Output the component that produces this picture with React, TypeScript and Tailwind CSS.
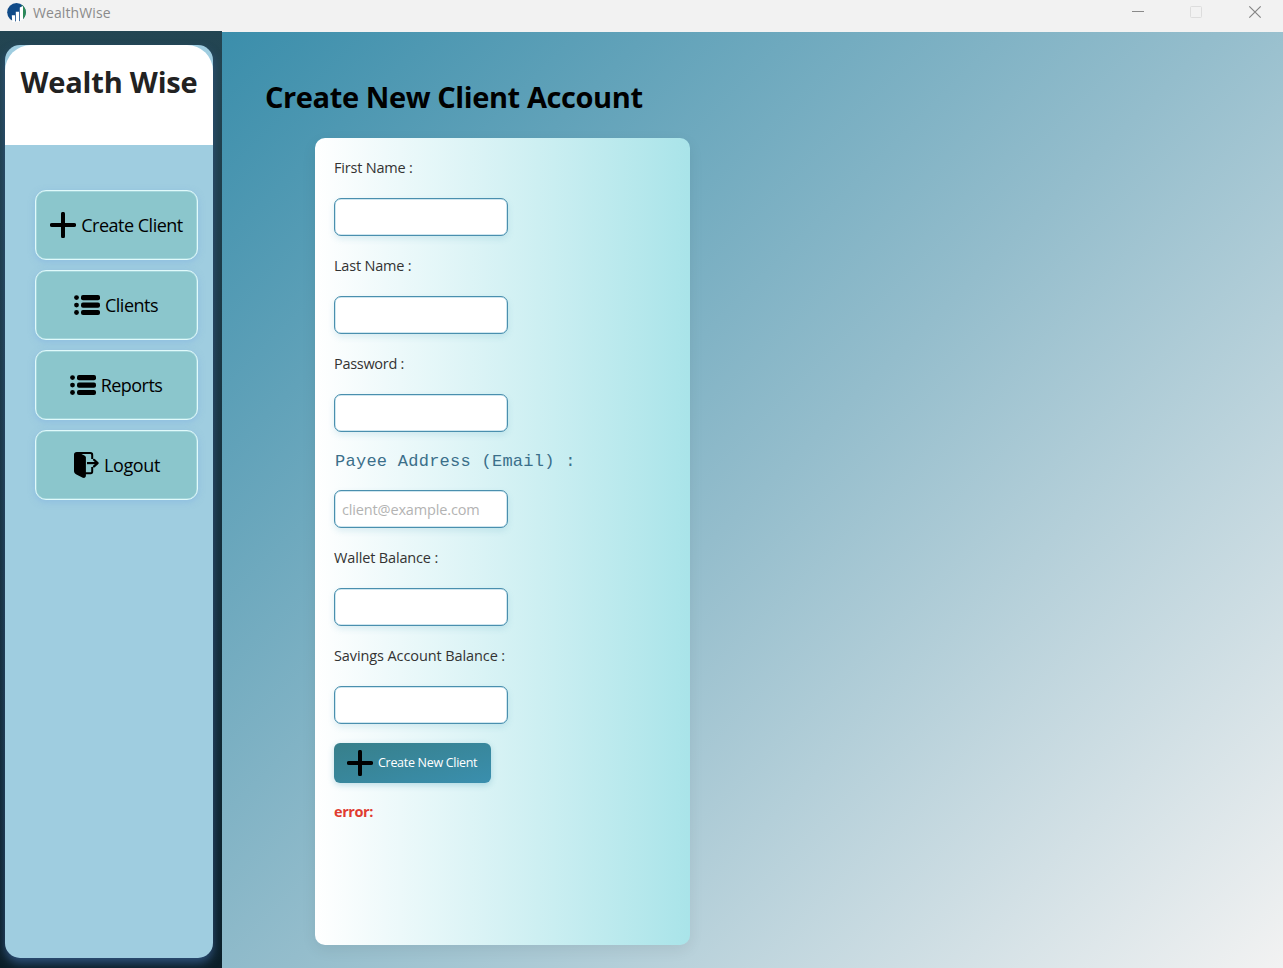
import React from "react";

function PlusIcon() {
  return (
    <svg width="26" height="26" viewBox="0 0 26 26" className="shrink-0">
      <path d="M13 1.8V24.2M1.8 13H24.2" stroke="#000" strokeWidth="4" strokeLinecap="round" />
    </svg>
  );
}

function ListIcon() {
  return (
    <svg width="26" height="26" viewBox="0 0 26 26" className="shrink-0">
      {[5.6, 13.1, 20.5].map((y) => (
        <g key={y}>
          <circle cx="2.5" cy={y} r="2.4" />
          <rect x="7" y={y - 2.6} width="19" height="5.2" rx="2" />
        </g>
      ))}
    </svg>
  );
}

function LogoutIcon() {
  return (
    <svg width="26" height="26" viewBox="0 0 26 26" className="shrink-0">
      <path d="M1 2.6C1 1 2.2 0 4 .1L6 .8L11.4 3.4C12.4 3.9 12.9 4.6 12.9 5.6V23.6C12.9 25.4 11.6 26.3 9.8 25.8L3.4 22.4C1.8 21.6 1 20.6 1 19Z" />
      <path d="M4 1.1H17.4C18.6 1.1 19.2 1.7 19.2 2.9V7M19.2 15V19.6C19.2 20.6 18.7 21.2 17.7 21.2H12" fill="none" stroke="#000" strokeWidth="2" />
      <path d="M14 11.1H24" fill="none" stroke="#000" strokeWidth="2.2" />
      <path d="M21 7.8L24.6 11.1L21 14.4" fill="none" stroke="#000" strokeWidth="2.2" strokeLinecap="round" strokeLinejoin="round" />
    </svg>
  );
}

function Logo() {
  return (
    <svg width="19" height="19" viewBox="0 0 19 19" className="shrink-0">
      <circle cx="9.5" cy="9.3" r="9.3" fill="#104a87" />
      <path d="M14.5 1.5A9.3 9.3 0 0 1 15.4 16.6Z" fill="#2d8a58" />
      <path d="M4.8 12.2H8V19H5.2Z M8.8 8.8H12V19H8.8Z M12.8 4.5L16 3V16.8L12.8 18.6Z" fill="#fff" />
    </svg>
  );
}

const nav = [
  { label: "Create Client", icon: <PlusIcon />, cls: "tracking-[-0.5px]" },
  { label: "Clients", icon: <ListIcon />, cls: "pr-px tracking-[-0.5px]" },
  { label: "Reports", icon: <ListIcon />, cls: "pr-px tracking-[-0.55px]" },
  { label: "Logout", icon: <LogoutIcon />, cls: "tracking-[-0.35px]" },
];

const fields = [
  { label: "First Name :", cls: "tracking-[-0.2px]" },
  { label: "Last Name :", cls: "tracking-[-0.2px]" },
  { label: "Password :", cls: "tracking-[-0.3px]" },
  { label: "Payee Address (Email) :", mono: true, placeholder: "client@example.com" },
  { label: "Wallet Balance :", cls: "tracking-[-0.15px]" },
  { label: "Savings Account Balance :", cls: "tracking-[-0.1px]" },
];

export default function App() {
  return (
    <div className="flex h-[968px] w-[1283px] flex-col overflow-hidden bg-[#f2f2f2] font-['Open_Sans','Noto_Sans',sans-serif]">
      <header className="flex h-[31px] shrink-0 items-start">
        <div className="flex items-center gap-[7px] pt-[3px] pl-[7px]">
          <Logo />
          <span className="text-[14px] leading-[19px] tracking-[0.1px] text-[#8b8b8b]">WealthWise</span>
        </div>
        <div className="ml-auto flex pt-[5px] pr-[21px]">
          <svg width="130" height="14" viewBox="0 0 130 14" fill="none">
            <path d="M0 6.5H12" stroke="#8a8a8a" />
            <rect x="58.5" y="1.5" width="11" height="11" rx="1" stroke="#dddddd" />
            <path d="M117.3 1.3L128.7 12.7M128.7 1.3L117.3 12.7" stroke="#858585" strokeWidth="1.2" />
          </svg>
        </div>
      </header>
      <div className="flex min-h-0 flex-1">
        <aside className="flex w-[222px] shrink-0 flex-col overflow-hidden bg-linear-to-b from-[#234552] to-[#0b1f29] pt-[14px] pr-[9px] pb-[10px] pl-[5px]">
          <div className="flex flex-1 flex-col overflow-hidden rounded-[15px] bg-[#9fcde0] shadow-[0_5px_10px_rgba(52,88,135,0.85)]">
            <div className="flex h-[100px] shrink-0 justify-center rounded-t-[26px] bg-white pt-[17px]">
              <h1 className="text-[29px] leading-[40px] font-bold tracking-[-0.2px] whitespace-nowrap text-[#222]">Wealth Wise</h1>
            </div>
            <nav className="flex flex-col gap-[10px] pt-[45px] pr-[15px] pl-[30px]">
              {nav.map((n) => (
                <button key={n.label} className="flex h-[70px] items-center justify-center gap-[5px] rounded-[11px] border border-[#e0fafb] bg-[#8bc6cc] shadow-[0_2px_6px_rgba(125,175,225,0.5),inset_0_0_0_0.5px_rgba(224,250,251,0.6)]">
                  {n.icon}
                  <span className={"pb-[1px] text-[18px] leading-[24px] whitespace-nowrap text-black " + n.cls}>{n.label}</span>
                </button>
              ))}
            </nav>
          </div>
        </aside>
        <main className="mt-px flex-1 bg-[linear-gradient(135deg,#3b8eab,#94bdcc_50%,#f2f2f2)] pl-[43px]">
          <h2 className="pt-[45px] text-[29px] leading-[40px] font-bold tracking-[-0.4px] text-black">Create New Client Account</h2>
          <section className="mt-[21px] ml-[50px] h-[807px] w-[375px] rounded-[10px] bg-linear-to-r from-white to-[#a9e4e9] pt-[19px] pl-[19px] shadow-[0_5px_15px_rgba(0,0,0,0.07)]">
            {fields.map((f) => (
              <div key={f.label} className="mb-[19px]">
                {f.mono ? (
                  <div className="h-[20px] pt-px pl-px font-['Liberation_Mono',monospace] text-[17px] leading-[20px] tracking-[0.26px] whitespace-nowrap text-[#3b6f8a]">{f.label}</div>
                ) : (
                  <div className={"h-[22px] text-[14.5px] leading-[22px] whitespace-nowrap text-[#333] " + f.cls}>{f.label}</div>
                )}
                <input
                  placeholder={f.placeholder}
                  className="mt-[19px] block h-[38px] w-[174px] rounded-[7px] border border-[#4a8fae] bg-white px-[7px] text-[14.5px] tracking-[-0.15px] shadow-[0_3px_6px_rgba(60,150,180,0.15),inset_0_0_0_0.5px_rgba(120,185,210,0.7)] placeholder:text-[#b3b3b3]"
                />
              </div>
            ))}
            <button className="flex h-[40px] w-[157px] items-center gap-[5px] rounded-[6px] bg-linear-to-br from-[#377f8a] to-[#3a8fae] pb-px pl-[13px] text-white shadow-[0_2px_6px_rgba(60,150,180,0.3)]">
              <PlusIcon />
              <span className="text-[12.5px] leading-[18px] tracking-[-0.3px] whitespace-nowrap">Create New Client</span>
            </button>
            <div className="mt-[18px] text-[14.5px] leading-[22px] font-bold tracking-[-0.4px] text-[#e03c31]">error:</div>
          </section>
        </main>
      </div>
    </div>
  );
}
